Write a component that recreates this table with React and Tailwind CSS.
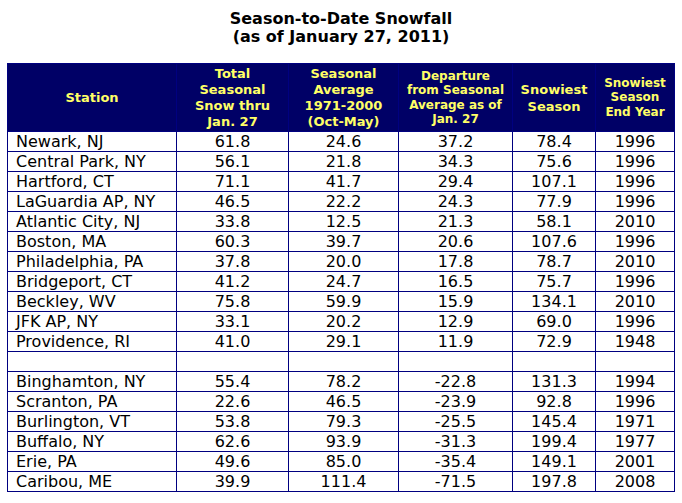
import React from 'react'

const rows = [
  ['Newark, NJ', '61.8', '24.6', '37.2', '78.4', '1996'],
  ['Central Park, NY', '56.1', '21.8', '34.3', '75.6', '1996'],
  ['Hartford, CT', '71.1', '41.7', '29.4', '107.1', '1996'],
  ['LaGuardia AP, NY', '46.5', '22.2', '24.3', '77.9', '1996'],
  ['Atlantic City, NJ', '33.8', '12.5', '21.3', '58.1', '2010'],
  ['Boston, MA', '60.3', '39.7', '20.6', '107.6', '1996'],
  ['Philadelphia, PA', '37.8', '20.0', '17.8', '78.7', '2010'],
  ['Bridgeport, CT', '41.2', '24.7', '16.5', '75.7', '1996'],
  ['Beckley, WV', '75.8', '59.9', '15.9', '134.1', '2010'],
  ['JFK AP, NY', '33.1', '20.2', '12.9', '69.0', '1996'],
  ['Providence, RI', '41.0', '29.1', '11.9', '72.9', '1948'],
  null,
  ['Binghamton, NY', '55.4', '78.2', '-22.8', '131.3', '1994'],
  ['Scranton, PA', '22.6', '46.5', '-23.9', '92.8', '1996'],
  ['Burlington, VT', '53.8', '79.3', '-25.5', '145.4', '1971'],
  ['Buffalo, NY', '62.6', '93.9', '-31.3', '199.4', '1977'],
  ['Erie, PA', '49.6', '85.0', '-35.4', '149.1', '2001'],
  ['Caribou, ME', '39.9', '111.4', '-71.5', '197.8', '2008'],
]

const th = 'border border-[#000080] bg-[#000066] text-[#ffff66] font-bold text-center align-middle p-0'
const td = 'border border-[#000080] h-[20px] p-0 leading-[19px] text-[16px] text-black'

export default function App() {
  return (
    <div className="bg-white w-[682px] h-[503px] font-['DejaVu_Sans',sans-serif]">
      <div className="pt-[10px] text-center font-bold text-[16px] leading-[18px] text-black">
        <div>Season-to-Date Snowfall</div>
        <div>(as of January 27, 2011)</div>
      </div>
      <table className="mt-[17px] ml-[7px] w-[667px] table-fixed border-collapse">
        <colgroup>
          <col className="w-[169px]" />
          <col className="w-[112px]" />
          <col className="w-[110px]" />
          <col className="w-[114px]" />
          <col className="w-[83px]" />
          <col className="w-[79px]" />
        </colgroup>
        <thead>
          <tr className="h-[68px]">
            <th className={`${th} text-[13px] leading-[16px]`}>Station</th>
            <th className={`${th} text-[13px] leading-[16px]`}>
              Total<br />Seasonal<br />Snow thru<br />Jan. 27
            </th>
            <th className={`${th} text-[13px] leading-[16px]`}>
              Seasonal<br />Average<br />1971-2000<br />(Oct-May)
            </th>
            <th className={`${th} text-[12px] leading-[14.5px]`}>
              Departure<br />from Seasonal<br />Average as of<br />Jan. 27
            </th>
            <th className={`${th} text-[13px] leading-[17px]`}>
              Snowiest<br />Season
            </th>
            <th className={`${th} text-[12px] leading-[14.5px]`}>
              Snowiest<br />Season<br />End Year
            </th>
          </tr>
        </thead>
        <tbody>
          {rows.map((r, i) =>
            r ? (
              <tr key={i}>
                <td className={`${td} pl-[8px] text-left`}>{r[0]}</td>
                <td className={`${td} text-center`}>{r[1]}</td>
                <td className={`${td} text-center`}>{r[2]}</td>
                <td className={`${td} text-center`}>{r[3]}</td>
                <td className={`${td} text-center`}>{r[4]}</td>
                <td className={`${td} text-center`}>{r[5]}</td>
              </tr>
            ) : (
              <tr key={i}>
                <td className={td}></td>
                <td className={td}></td>
                <td className={td}></td>
                <td className={td}></td>
                <td className={td}></td>
                <td className={td}></td>
              </tr>
            )
          )}
        </tbody>
      </table>
    </div>
  )
}
